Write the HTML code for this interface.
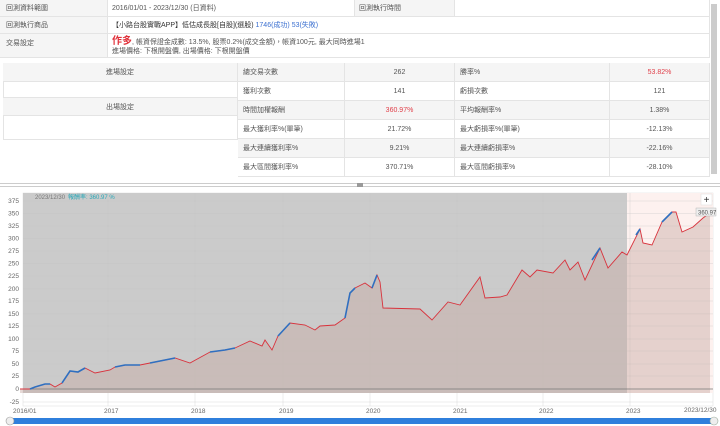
<!DOCTYPE html>
<html><head><meta charset="utf-8"><style>
*{margin:0;padding:0;box-sizing:border-box}
body{width:720px;height:426px;background:#fff;font-family:"Liberation Sans","Noto Sans CJK TC",sans-serif;font-size:7px;color:#555;position:relative;overflow:hidden}
.a{position:absolute}
.c{position:absolute;display:flex;align-items:center;border-bottom:1px solid #e4e4e4;border-right:1px solid #e4e4e4}
.g{background:#f5f5f5}
.ctr{justify-content:center}
.red{color:#e0404a}
</style></head><body>
<div class="c g" style="left:0;top:0;width:108px;height:17px;padding-left:6px">回測資料範圍</div>
<div class="c" style="left:108px;top:0;width:247px;height:17px;padding-left:4px">2016/01/01 - 2023/12/30 (日資料)</div>
<div class="c g" style="left:355px;top:0;width:100px;height:17px;padding-left:4px">回測執行時間</div>
<div class="c" style="left:455px;top:0;width:255px;height:17px"></div>
<div class="c g" style="left:0;top:17px;width:108px;height:17px;padding-left:6px">回測執行商品</div>
<div class="c" style="left:108px;top:17px;width:602px;height:17px;padding-left:4px;color:#333">【小路台股實戰APP】低估成長股[自股](選股)&nbsp;<span style="color:#3a6fd0">1746(成功) 53(失敗)</span></div>
<div class="c g" style="left:0;top:34px;width:108px;height:24px;padding-left:6px;align-items:flex-start;padding-top:4px">交易設定</div>
<div class="c" style="left:108px;top:34px;width:602px;height:24px;padding-left:4px;display:block;padding-top:3px;line-height:9px"><span style="color:#e0303a;font-size:10px;font-weight:bold">作多</span>, 帳資保證金成數: 13.5%, 股票0.2%(成交金額)，帳資100元, 最大同時進場1<br>進場價格: 下根開盤價, 出場價格: 下根開盤價</div>
<div class="a" style="left:711px;top:4px;width:6px;height:170px;background:#ccc"></div>
<div class="a" style="left:3px;top:63px;width:235px;height:77px;border:1px solid #e4e4e4"></div>
<div class="c g ctr" style="left:3px;top:63px;width:235px;height:19px">進場設定</div>
<div class="c" style="left:3px;top:82px;width:235px;height:16px"></div>
<div class="c g ctr" style="left:3px;top:98px;width:235px;height:18px">出場設定</div>
<div class="a" style="left:238px;top:63px">
<div style="display:grid;grid-template-columns:107px 110px 155px 100px;width:472px">
<div class="c g" style="position:static;height:19px;padding-left:5px">總交易次數</div><div class="c g ctr" style="position:static;height:19px">262</div><div class="c g" style="position:static;height:19px;padding-left:5px">勝率%</div><div class="c g ctr red" style="position:static;height:19px">53.82%</div>
<div class="c" style="position:static;height:19px;padding-left:5px">獲利次數</div><div class="c ctr" style="position:static;height:19px">141</div><div class="c" style="position:static;height:19px;padding-left:5px">虧損次數</div><div class="c ctr" style="position:static;height:19px">121</div>
<div class="c g" style="position:static;height:19px;padding-left:5px">時間加權報酬</div><div class="c g ctr red" style="position:static;height:19px">360.97%</div><div class="c g" style="position:static;height:19px;padding-left:5px">平均報酬率%</div><div class="c g ctr" style="position:static;height:19px">1.38%</div>
<div class="c" style="position:static;height:19px;padding-left:5px">最大獲利率%(單筆)</div><div class="c ctr" style="position:static;height:19px">21.72%</div><div class="c" style="position:static;height:19px;padding-left:5px">最大虧損率%(單筆)</div><div class="c ctr" style="position:static;height:19px">-12.13%</div>
<div class="c g" style="position:static;height:19px;padding-left:5px">最大連續獲利率%</div><div class="c g ctr" style="position:static;height:19px">9.21%</div><div class="c g" style="position:static;height:19px;padding-left:5px">最大連續虧損率%</div><div class="c g ctr" style="position:static;height:19px">-22.16%</div>
<div class="c" style="position:static;height:19px;padding-left:5px">最大區間獲利率%</div><div class="c ctr" style="position:static;height:19px">370.71%</div><div class="c" style="position:static;height:19px;padding-left:5px">最大區間虧損率%</div><div class="c ctr" style="position:static;height:19px">-28.10%</div>
</div></div>
<div class="a" style="left:0;top:183px;width:720px;height:1px;background:#ccc"></div>
<div class="a" style="left:0;top:186px;width:720px;height:1px;background:#ccc"></div>
<div class="a" style="left:357px;top:183px;width:6px;height:4px;background:#999"></div>
<svg class="a" style="left:0;top:188px" width="720" height="238" viewBox="0 188 720 238">
<rect x="23" y="193" width="690" height="213" fill="#fff" stroke="#ddd" stroke-width="0.5"/>
<rect x="627" y="193" width="86" height="200" fill="#fdf1ef"/>
<rect x="23" y="193" width="604" height="200" fill="#cbcbcb"/>
<g stroke="#c2c2c2" stroke-width="0.3">
<line x1="23" x2="713" y1="201" y2="201"/><line x1="23" x2="713" y1="213.5" y2="213.5"/><line x1="23" x2="713" y1="226" y2="226"/><line x1="23" x2="713" y1="238.6" y2="238.6"/><line x1="23" x2="713" y1="251" y2="251"/><line x1="23" x2="713" y1="263.7" y2="263.7"/><line x1="23" x2="713" y1="276" y2="276"/><line x1="23" x2="713" y1="288.8" y2="288.8"/><line x1="23" x2="713" y1="301" y2="301"/><line x1="23" x2="713" y1="313.9" y2="313.9"/><line x1="23" x2="713" y1="326" y2="326"/><line x1="23" x2="713" y1="339" y2="339"/><line x1="23" x2="713" y1="351" y2="351"/><line x1="23" x2="713" y1="364" y2="364"/><line x1="23" x2="713" y1="376" y2="376"/><line x1="23" x2="713" y1="402" y2="402"/>
<line x1="108" x2="108" y1="193" y2="406"/><line x1="195" x2="195" y1="193" y2="406"/><line x1="283" x2="283" y1="193" y2="406"/><line x1="370" x2="370" y1="193" y2="406"/><line x1="457" x2="457" y1="193" y2="406"/><line x1="543" x2="543" y1="193" y2="406"/><line x1="630" x2="630" y1="193" y2="406"/>
</g>
<polygon fill="rgba(200,170,165,0.45)" points="20,389 30,389 35,387 45,384 50,384 55,387 62,383 70,371 78,372 85,368 95,373 110,370 115,367 125,365 140,365 150,363 165,360 175,358 190,363 210,352 225,350 235,348 250,341 262,346 265,340 272,350 278,336 290,323 305,325 315,330 320,326 335,325 345,318 350,293 355,288 365,283 372,288 377,275 380,282 383,308 420,309 432,320 448,302 460,305 480,277 485,298 500,297 507,295 522,270 530,277 537,270 553,273 565,260 570,270 578,262 585,280 600,248 608,268 622,252 627,255 640,229 643,243 652,245 662,222 672,212 676,212 682,232 693,227 703,218 710,213 710,393 20,393"/>
<line x1="23" x2="713" y1="389" y2="389" stroke="#777" stroke-width="0.8"/>
<polyline fill="none" stroke="#d8323c" stroke-width="0.9" points="20,389 30,389 35,387 45,384 50,384 55,387 62,383 70,371 78,372 85,368 95,373 110,370 115,367 125,365 140,365 150,363 165,360 175,358 190,363 210,352 225,350 235,348 250,341 262,346 265,340 272,350 278,336 290,323 305,325 315,330 320,326 335,325 345,318 350,293 355,288 365,283 372,288 377,275 380,282 383,308 420,309 432,320 448,302 460,305 480,277 485,298 500,297 507,295 522,270 530,277 537,270 553,273 565,260 570,270 578,262 585,280 600,248 608,268 622,252 627,255 640,229 643,243 652,245 662,222 672,212 676,212 682,232 693,227 703,218 710,213"/>
<g fill="none" stroke="#2f6fc0" stroke-width="1.6">
<polyline points="30,389 35,387 45,384 50,384"/><polyline points="62,383 70,371 78,372 85,368"/><polyline points="115,367 125,365 140,365"/><polyline points="150,363 165,360 175,358"/><polyline points="210,352 225,350 235,348"/><polyline points="278,336 290,323"/><polyline points="345,318 350,293 355,288"/><polyline points="372,288 377,275"/><polyline points="592,260 600,248"/><polyline points="636,235 640,229"/><polyline points="662,222 672,212"/>
</g>
<g font-size="6.5" fill="#666" font-family="Liberation Sans,sans-serif" text-anchor="end">
<text x="19" y="203">375</text><text x="19" y="215.5">350</text><text x="19" y="228">325</text><text x="19" y="240.6">300</text><text x="19" y="253">275</text><text x="19" y="265.7">250</text><text x="19" y="278">225</text><text x="19" y="290.8">200</text><text x="19" y="303">175</text><text x="19" y="315.9">150</text><text x="19" y="328">125</text><text x="19" y="341">100</text><text x="19" y="353">75</text><text x="19" y="366">50</text><text x="19" y="378">25</text><text x="19" y="391">0</text><text x="19" y="404">-25</text>
</g>
<g font-size="6.5" fill="#666" font-family="Liberation Sans,sans-serif">
<text x="13" y="413">2016/01</text><text x="104" y="413">2017</text><text x="191" y="413">2018</text><text x="279" y="413">2019</text><text x="366" y="413">2020</text><text x="453" y="413">2021</text><text x="539" y="413">2022</text><text x="626" y="413">2023</text><text x="684" y="412">2023/12/30</text>
</g>
<text x="35" y="199" font-size="6" fill="#777">2023/12/30</text>
<text x="68" y="199" font-size="6" fill="#2aa8b8">報酬率: 360.97 %</text>
<rect x="701" y="194" width="11" height="11" fill="#fff" stroke="#ddd" stroke-width="0.5"/>
<text x="706.5" y="203" font-size="10" text-anchor="middle" fill="#333">+</text>
<rect x="696" y="208" width="20" height="8" fill="#eee" stroke="#aaa" stroke-width="0.4"/>
<text x="698" y="214.5" font-size="6" fill="#555">360.97</text>
<rect x="12" y="418" width="700" height="6" fill="#2f7fdc"/>
<circle cx="10" cy="421" r="4" fill="#eee" stroke="#999" stroke-width="0.6"/>
<circle cx="714" cy="421" r="4" fill="#eee" stroke="#9a9" stroke-width="0.6"/>
</svg>
</body></html>
